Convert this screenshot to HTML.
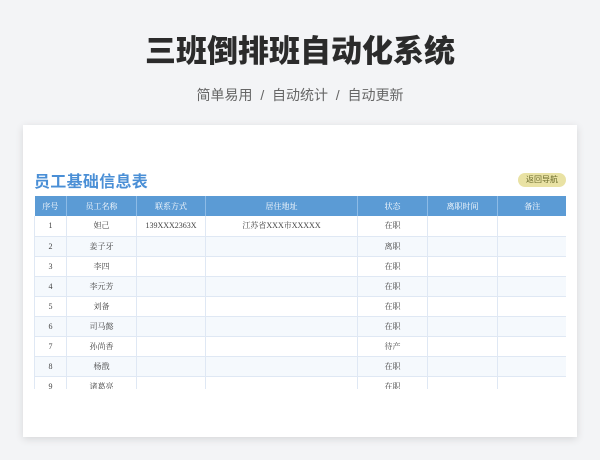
<!DOCTYPE html>
<html><head><meta charset="utf-8"><style>
*{margin:0;padding:0;box-sizing:border-box}
body{width:600px;height:460px;background:#f3f4f6;font-family:"Liberation Sans","Noto Sans CJK SC",sans-serif;position:relative;overflow:hidden}
h1{position:absolute;top:26px;left:0;width:600px;text-align:center;font-size:31px;font-weight:900;color:#2b2b2b;letter-spacing:0px}
.sub{position:absolute;top:85px;width:600px;text-align:center;font-size:14px;color:#666}
.card{position:absolute;left:23px;top:125px;width:554px;height:312px;background:#fff;box-shadow:0 2px 8px rgba(0,0,0,0.12)}
.t{position:absolute;left:11px;top:43px;font-size:16px;font-weight:bold;color:#4a8fd6;letter-spacing:0.3px}
.btn{position:absolute;left:495px;top:48px;width:48px;height:14px;border-radius:7px;background:#e9e2a4;font-size:8px;color:#6a6a2a;text-align:center;line-height:14px}
.wrap{position:absolute;left:11px;top:71px;width:532px;height:193px;overflow:hidden}
table{border-collapse:collapse;table-layout:fixed;width:532px;font-family:"Liberation Serif","Noto Serif CJK SC",serif}
th{background:#5b9bd5;color:#fff;font-weight:normal;font-size:8px;height:20px;border-left:1px solid #8dbbe6}
th:first-child{border-left:none}
td{height:20px;font-size:8px;color:#444;text-align:center;border:1px solid #dfe8f4;border-top:none}
tr:nth-child(odd) td{background:#f5f9fd}
</style></head><body>
<h1>三班倒排班自动化系统</h1>
<div class="sub">简单易用 &nbsp;/&nbsp; 自动统计 &nbsp;/&nbsp; 自动更新</div>
<div class="card">
<div class="t">员工基础信息表</div>
<div class="btn">返回导航</div>
<div class="wrap"><table>
<colgroup><col style="width:32px"><col style="width:70px"><col style="width:69px"><col style="width:152px"><col style="width:70px"><col style="width:70px"><col style="width:69px"></colgroup>
<tr><th>序号</th><th>员工名称</th><th>联系方式</th><th>居住地址</th><th>状态</th><th>离职时间</th><th>备注</th></tr>
<tr><td>1</td><td>妲己</td><td>139XXX2363X</td><td>江苏省XXX市XXXXX</td><td>在职</td><td></td><td></td></tr>
<tr><td>2</td><td>姜子牙</td><td></td><td></td><td>离职</td><td></td><td></td></tr>
<tr><td>3</td><td>李四</td><td></td><td></td><td>在职</td><td></td><td></td></tr>
<tr><td>4</td><td>李元芳</td><td></td><td></td><td>在职</td><td></td><td></td></tr>
<tr><td>5</td><td>刘备</td><td></td><td></td><td>在职</td><td></td><td></td></tr>
<tr><td>6</td><td>司马懿</td><td></td><td></td><td>在职</td><td></td><td></td></tr>
<tr><td>7</td><td>孙尚香</td><td></td><td></td><td>待产</td><td></td><td></td></tr>
<tr><td>8</td><td>杨戬</td><td></td><td></td><td>在职</td><td></td><td></td></tr>
<tr><td>9</td><td>诸葛亮</td><td></td><td></td><td>在职</td><td></td><td></td></tr>
</table></div>
</div>
</body></html>
